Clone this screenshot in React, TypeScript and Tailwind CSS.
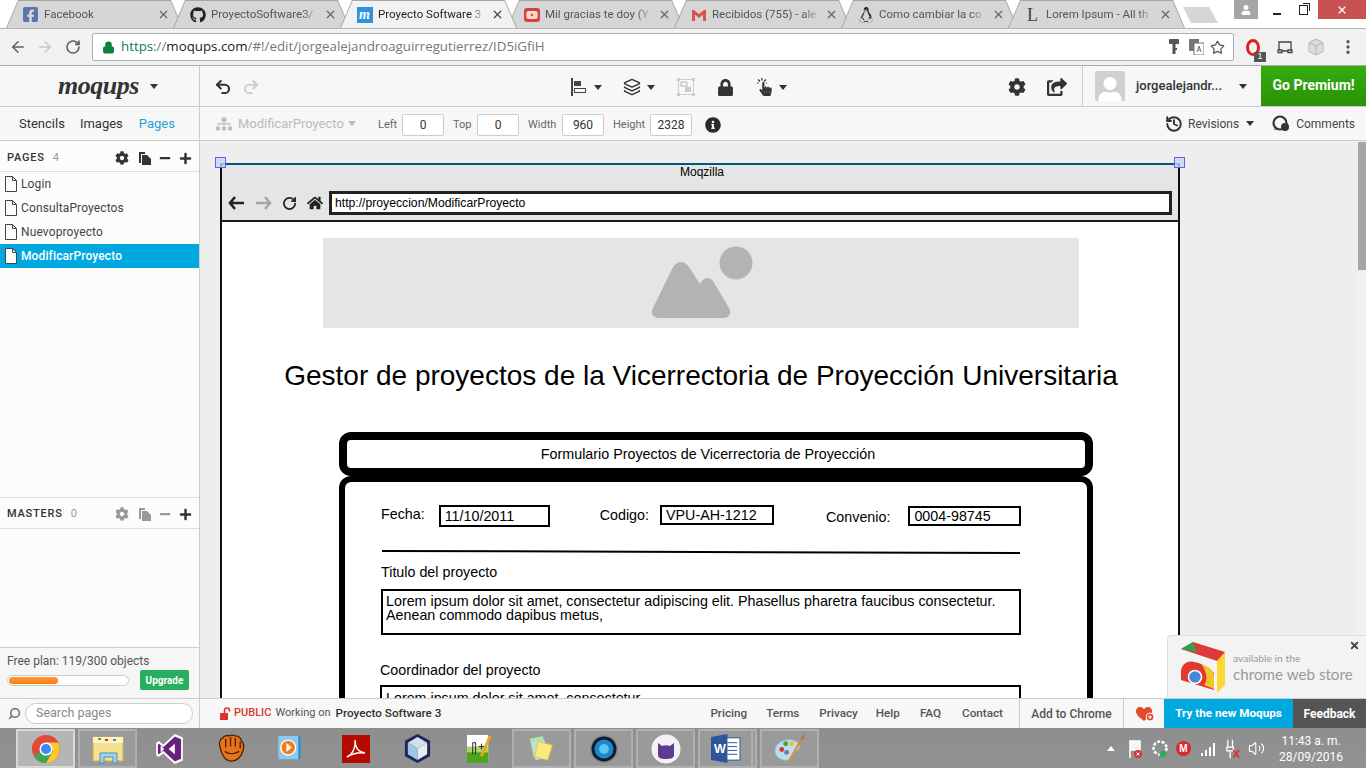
import { ArrowLeft, ArrowRight, RotateCw, Star, Lock, X, Search, Layers, MoreVertical, Undo2, Redo2, History, Volume2 } from "lucide-react"
import { FaFacebookSquare, FaGithub, FaYoutube, FaLinux, FaCog, FaHome, FaLock, FaPlus, FaMinus, FaInfoCircle, FaShareSquare, FaUser, FaHandPointer, FaSitemap } from "react-icons/fa"

const ui = "font-['Roboto',sans-serif]"
const arial = "font-['Liberation_Sans',Arial,sans-serif]"

function Caret({ className = "" }: { className?: string }) {
  return <span className={`inline-block h-0 w-0 shrink-0 border-x-[4px] border-t-[5px] border-x-transparent border-t-[#333] ${className}`} />
}

function Gmail() {
  return (
    <svg viewBox="0 0 16 16" className="h-4 w-4">
      <path d="M1 3h2l5 4 5-4h2v11h-3V7.5L8 11 4 7.5V14H1z" fill="#d9534a" />
    </svg>
  )
}

const tabs = [
  { title: "Facebook", icon: <FaFacebookSquare className="h-[17px] w-[17px] text-[#5a74ac]" /> },
  { title: "ProyectoSoftware3/", icon: <FaGithub className="h-4 w-4 text-[#222]" /> },
  {
    title: "Proyecto Software 3",
    active: true,
    icon: <span className="flex h-4 w-4 items-center justify-center bg-[#2d93dd] font-['Liberation_Serif',serif] text-[14px] font-bold italic leading-none text-white">m</span>,
  },
  { title: "Mil gracias te doy (Y", icon: <span className="flex h-[14px] w-4 items-center justify-center rounded-[3px] bg-[#d9413f]"><FaYoutube className="h-3 w-3 text-[#f7d9d0]" /></span> },
  { title: "Recibidos (755) - ale", icon: <Gmail /> },
  { title: "Como cambiar la co", icon: <FaLinux className="h-4 w-4 text-[#222]" /> },
  { title: "Lorem Ipsum - All th", icon: <span className="w-4 text-center font-['Liberation_Serif',serif] text-[18px] leading-none text-[#444]">L</span> },
]

function ChromeTab({ tab }: { tab: (typeof tabs)[0] }) {
  return (
    <div className={`relative -mr-[10px] h-[28px] w-[177px] shrink-0 ${tab.active ? "z-10" : ""}`}>
      <div className="absolute inset-0 bg-[#a6a6a6] [clip-path:polygon(0_100%,12px_0,165px_0,177px_100%)]" />
      <div className={`absolute inset-x-0 bottom-0 top-[1px] flex items-center pl-[16px] pr-[12px] [clip-path:polygon(1px_100%,12.5px_0,164.5px_0,176px_100%)] ${tab.active ? "bg-[#f2f2f2]" : "bg-[#d6d6d6]"}`}>
        <div className="flex w-[17px] shrink-0 justify-center">{tab.icon}</div>
        <span className={`ml-[5px] w-[108px] shrink-0 overflow-hidden whitespace-nowrap ${ui} text-[11.5px] [mask-image:linear-gradient(to_right,black_85%,transparent)] ${tab.active ? "text-[#222]" : "text-[#555]"}`}>
          {tab.title}
        </span>
        <X className={`ml-[5px] h-[13px] w-[13px] shrink-0 ${tab.active ? "text-[#444]" : "text-[#666]"}`} strokeWidth={2.2} />
      </div>
    </div>
  )
}

function TabStrip() {
  return (
    <div className="relative flex h-[28px] shrink-0 items-end bg-white pl-[6px]">
      {tabs.map((tab) => <ChromeTab key={tab.title} tab={tab} />)}
      <div className="ml-[8px] mt-[7px] h-[16px] w-[35px] self-start bg-[#d6d6d6] [clip-path:polygon(0_0,26px_0,35px_100%,8px_100%)]" />
      <div className="ml-auto flex h-[19px] self-start">
        <div className="flex w-[24px] items-center justify-center bg-[#a6a6a6]"><FaUser className="h-[10px] w-[10px] text-white" /></div>
        <div className="flex w-[38px] items-center justify-center pt-[3px]"><div className="mt-[5px] h-[2px] w-[8px] bg-[#222]" /></div>
        <div className="flex w-[22px] items-center justify-start pl-[3px]">
          <div className="relative h-[10px] w-[9px] border border-[#222]"><div className="absolute -right-[3px] -top-[3px] h-[8px] w-[7px] border-r border-t border-[#222]" /></div>
        </div>
        <div className="flex w-[48px] items-center justify-center bg-[#c75050]"><X className="h-[12px] w-[12px] text-white" strokeWidth={2.5} /></div>
      </div>
    </div>
  )
}

function AddressBar() {
  return (
    <div className="flex h-[38px] shrink-0 items-center border-y border-t-[#b5b5b5] border-b-[#ababab] bg-[#f2f2f2]">
      <ArrowLeft className="ml-[9px] h-[18px] w-[18px] text-[#5f5f5f]" strokeWidth={2} />
      <ArrowRight className="ml-[9px] h-[18px] w-[18px] text-[#c8c8c8]" strokeWidth={2} />
      <RotateCw className="ml-[11px] h-[16px] w-[16px] text-[#5f5f5f]" strokeWidth={2.4} />
      <div className="ml-[11px] flex h-[28px] w-[1142px] items-center rounded-[2px] border border-[#b0b0b0] bg-white pl-[9px] pr-[8px]">
        <Lock className="h-[13px] w-[13px] text-[#0b8043]" fill="#0b8043" strokeWidth={2} />
        <span className="ml-[6px] font-['Open_Sans',sans-serif] text-[13.3px] text-[#777]">
          <span className="text-[#0b8043]">https</span>://<span className="text-[#222]">moqups.com</span>/#!/edit/jorgealejandroaguirregutierrez/ID5iGfiH
        </span>
        <svg viewBox="0 0 10 16" className="ml-auto h-[16px] w-[10px]" fill="#555">
          <rect x="0" y="0" width="10" height="5" rx="1" />
          <rect x="3.5" y="4" width="3" height="11" />
          <rect x="6" y="9" width="2" height="2" />
        </svg>
        <svg viewBox="0 0 15 16" className="ml-[10px] h-[16px] w-[15px]">
          <rect x="0" y="0" width="10" height="12" fill="#777" />
          <rect x="5" y="4" width="10" height="12" fill="#fff" stroke="#777" />
          <path d="M8 13l2-6 2 6M9 11h2" fill="none" stroke="#777" />
        </svg>
        <Star className="ml-[6px] h-[15px] w-[15px] text-[#555]" strokeWidth={2} />
      </div>
      <div className="relative ml-[11px] flex w-[15px] justify-center">
        <span className="h-[17px] w-[14px] rounded-[50%] border-[3px] border-[#e01f1f]" />
        <span className="absolute -bottom-[6px] left-[9px] flex h-[10px] w-[12px] items-center justify-center bg-[#555] font-['Liberation_Sans',sans-serif] text-[9px] leading-none text-white">1</span>
      </div>
      <svg viewBox="0 0 16 16" className="ml-[17px] h-[16px] w-[16px]" fill="none" stroke="#444" strokeWidth="1.3">
        <path d="M2 11V3h12v8M1 11h4v2.5H1zM11 11h4v2.5h-4zM5 12h6" />
      </svg>
      <svg viewBox="0 0 16 18" className="ml-[15px] h-[18px] w-[16px]">
        <path d="M8 1l7 3.5v9L8 17l-7-3.5v-9z" fill="#dcdcdc" stroke="#b5b5b5" />
        <path d="M8 8v9M1 4.5L8 8l7-3.5" fill="none" stroke="#b5b5b5" />
      </svg>
      <MoreVertical className="ml-[15px] h-[18px] w-[18px] text-[#555]" strokeWidth={2.4} />
    </div>
  )
}

function AlignIcon() {
  return (
    <svg viewBox="0 0 16 18" className="h-[18px] w-[16px] shrink-0">
      <rect x="0" y="0" width="2" height="18" fill="#444" />
      <rect x="3" y="3" width="7" height="5" fill="#444" />
      <rect x="3.5" y="10.5" width="11" height="4" fill="none" stroke="#444" />
    </svg>
  )
}

function GroupIcon() {
  return (
    <svg viewBox="0 0 18 18" className="h-[18px] w-[18px] shrink-0">
      <rect x="1.5" y="1.5" width="15" height="15" fill="none" stroke="#ccc" />
      <rect x="4" y="4" width="6" height="4" fill="none" stroke="#bbb" />
      <rect x="8" y="9" width="6" height="5" fill="#ccc" />
      <rect x="0" y="0" width="3" height="3" fill="#ccc" />
      <rect x="15" y="0" width="3" height="3" fill="#ccc" />
      <rect x="0" y="15" width="3" height="3" fill="#ccc" />
      <rect x="15" y="15" width="3" height="3" fill="#ccc" />
    </svg>
  )
}

function TouchIcon() {
  return (
    <div className="relative ml-[24px] h-[18px] w-[15px] shrink-0">
      <svg viewBox="0 0 15 6" className="absolute left-0 top-0 h-[6px] w-[15px]" fill="none" stroke="#333" strokeWidth="1.2">
        <path d="M5 0v2.5M1 1.5l2 2M9 1.5l-2 2M0 5h1.5M10 5h-1" />
      </svg>
      <FaHandPointer className="absolute bottom-0 left-[2px] h-[14px] w-[13px] text-[#333]" />
    </div>
  )
}

function AppBar() {
  return (
    <div className={`flex h-[41px] shrink-0 items-stretch border-b border-[#ccc] bg-[#f7f7f7] ${ui}`}>
      <div className="flex w-[200px] shrink-0 items-center border-r border-[#ccc] pl-[58px]">
        <span className="font-['Liberation_Serif',serif] text-[26px] font-bold italic leading-none tracking-[-0.5px] text-[#333]">moqups</span>
        <Caret className="ml-[11px]" />
      </div>
      <div className="flex flex-1 items-center pt-[2px]">
        <Undo2 className="ml-[14px] h-[18px] w-[18px] text-[#333]" strokeWidth={2.8} />
        <Redo2 className="ml-[10px] h-[18px] w-[18px] text-[#ccc]" strokeWidth={2.8} />
        <div className="ml-[311px] flex"><AlignIcon /></div>
        <Caret className="ml-[7px]" />
        <Layers className="ml-[21px] h-[18px] w-[18px] text-[#333]" strokeWidth={2} />
        <Caret className="ml-[6px]" />
        <div className="ml-[22px] flex"><GroupIcon /></div>
        <FaLock className="ml-[23px] h-[17px] w-[15px] text-[#333]" />
        <TouchIcon />
        <Caret className="ml-[7px]" />
        <FaCog className="ml-[221px] h-[18px] w-[18px] text-[#333]" />
        <FaShareSquare className="ml-[21px] h-[18px] w-[20px] text-[#333]" />
      </div>
      <div className="flex w-[179px] shrink-0 items-center border-l border-[#ccc] pl-[12px]">
        <div className="flex h-[30px] w-[30px] items-end justify-center overflow-hidden rounded-[2px] bg-[#d0d0d0]"><FaUser className="-mb-[2px] h-[26px] w-[24px] text-white" /></div>
        <span className="ml-[11px] text-[13px] font-medium text-[#333]">jorgealejandr...</span>
        <Caret className="ml-auto mr-[14px]" />
      </div>
      <div className="flex w-[105px] shrink-0 items-center justify-center bg-gradient-to-b from-[#33ad0c] to-[#2a9207] pb-[2px] text-[14px] font-bold text-white">Go Premium!</div>
    </div>
  )
}

function Field({ label, value, labelWidth, className = "" }: { label: string; value: string; labelWidth: string; className?: string }) {
  return (
    <div className={`flex items-center ${className}`}>
      <span className={`${labelWidth} pt-[2px] text-[11px] text-[#666]`}>{label}</span>
      <div className="flex h-[22px] w-[42px] items-center justify-center rounded-[2px] border border-[#ccc] bg-white text-[12px] text-[#333]">{value}</div>
    </div>
  )
}

function CommentsIcon() {
  return (
    <svg viewBox="0 0 18 17" className="ml-[18px] h-[17px] w-[18px] shrink-0">
      <circle cx="8" cy="8" r="6.5" fill="none" stroke="#333" strokeWidth="2.2" />
      <path d="M2 15l2-3 2 2z" fill="#333" />
      <circle cx="13" cy="12" r="4" fill="#333" />
    </svg>
  )
}

function PropsBar() {
  return (
    <div className={`flex h-[34px] shrink-0 items-center border-b border-[#ccc] bg-[#f7f7f7] ${ui}`}>
      <div className="flex h-full w-[200px] shrink-0 items-center border-r border-[#ccc] pl-[19px] text-[13px] text-[#333]">
        <span>Stencils</span>
        <span className="ml-[15px]">Images</span>
        <span className="ml-[16px] text-[#2a9fd8]">Pages</span>
      </div>
      <FaSitemap className="ml-[16px] h-[16px] w-[16px] text-[#bbb]" />
      <span className="ml-[6px] w-[106px] text-[13px] text-[#bbb]">ModificarProyecto</span>
      <Caret className="ml-[4px] border-t-[#bbb]" />
      <div className="flex items-center pt-[2px]">
        <Field className="ml-[22px]" label="Left" value="0" labelWidth="w-[24px]" />
        <Field className="ml-[9px]" label="Top" value="0" labelWidth="w-[24px]" />
        <Field className="ml-[9px]" label="Width" value="960" labelWidth="w-[34px]" />
        <Field className="ml-[9px]" label="Height" value="2328" labelWidth="w-[37px]" />
        <FaInfoCircle className="ml-[13px] h-[16px] w-[16px] text-[#2a2a2a]" />
      </div>
      <History className="ml-auto h-[18px] w-[18px] text-[#333]" strokeWidth={2.6} />
      <span className="ml-[5px] text-[12px] text-[#444]">Revisions</span>
      <Caret className="ml-[7px]" />
      <CommentsIcon />
      <span className="ml-[6px] mr-[11px] text-[12px] text-[#444]">Comments</span>
    </div>
  )
}

function CopyIcon({ className }: { className: string }) {
  return (
    <svg viewBox="0 0 12 13" className={`h-[13px] w-[12px] shrink-0 ${className}`} fill="currentColor">
      <path d="M0 0h6v2H2v9H0z" />
      <path d="M3 3h5l4 4v6H3z" />
    </svg>
  )
}

function PanelHeader({ name, count, faded, nudge }: { name: string; count: string; faded?: boolean; nudge: string }) {
  const muted = faded ? "text-[#999]" : "text-[#333]"
  return (
    <div className={`flex h-[31px] shrink-0 items-center border-b border-[#ddd] px-[7px] ${nudge}`}>
      <span className="text-[11px] font-medium tracking-[0.8px] text-[#333]">{name}</span>
      <span className="ml-[8px] text-[11px] text-[#999]">{count}</span>
      <FaCog className={`ml-auto h-[14px] w-[14px] ${muted}`} />
      <CopyIcon className={`ml-[10px] ${muted}`} />
      <FaMinus className={`ml-[8px] h-[12px] w-[12px] ${muted}`} />
      <FaPlus className="ml-[8px] h-[13px] w-[13px] text-[#333]" />
    </div>
  )
}

const pages = ["Login", "ConsultaProyectos", "Nuevoproyecto", "ModificarProyecto"]

function Sidebar() {
  return (
    <aside className={`flex w-[200px] shrink-0 flex-col border-r border-[#ccc] bg-[#fcfcfc] ${ui}`}>
      <PanelHeader name="PAGES" count="4" nudge="pt-[4px]" />
      <ul>
        {pages.map((page, i) => {
          const active = i === 3
          return (
            <li key={page} className={`flex h-[24px] items-center pl-[5px] text-[12px] tracking-[0.12px] ${active ? "bg-[#00a8e0] font-medium text-white" : "text-[#444]"}`}>
              <svg viewBox="0 0 12 16" className="h-[16px] w-[12px] shrink-0">
                <path d="M.5.5h7l4 4v11H.5z" fill={active ? "#fff" : "none"} stroke="#444" />
                <path d="M7.5.5v4h4" fill="none" stroke="#444" />
              </svg>
              <span className="ml-[4px]">{page}</span>
            </li>
          )
        })}
      </ul>
      <div className="mt-[229px] border-t border-[#ddd]">
        <PanelHeader name="MASTERS" count="0" faded nudge="pt-[2px]" />
      </div>
      <div className="mt-auto flex h-[51px] flex-col border-t border-[#ccc] bg-[#f6f6f6] pl-[7px]">
        <span className="mt-[6px] text-[12px] leading-[14px] text-[#555]">Free plan: 119/300 objects</span>
        <div className="mt-[2px] flex items-center">
          <div className="h-[11px] w-[122px] rounded-full border border-[#ccc] bg-white p-[1px]">
            <div className="h-full w-[49px] rounded-full bg-gradient-to-b from-[#ff9a33] to-[#f97f10]" />
          </div>
          <div className="ml-[11px] flex h-[20px] w-[49px] items-center justify-center rounded-[2px] bg-[#27ae60] text-[10px] font-bold text-white">Upgrade</div>
        </div>
      </div>
    </aside>
  )
}

function MountainIcon() {
  return (
    <svg viewBox="0 0 102 73" className="h-[73px] w-[102px]">
      <circle cx="85" cy="17" r="16.5" fill="#b3b3b3" />
      <path d="M22 21c2-3 5-5 8-5s6 2 8 5l11 17 2-3c2-2 3-3 5-3 3 0 4 1 6 3l16 27c3 5 0 10-5 10H8c-6 0-9-5-6-10z" fill="#b3b3b3" />
    </svg>
  )
}

function Boxed({ className, children }: { className: string; children: React.ReactNode }) {
  return <div className={`flex items-center border-2 border-black bg-white pl-[4px] text-[14.3px] leading-none text-black ${className}`}>{children}</div>
}

function Mockup() {
  return (
    <div className={`absolute left-[20px] top-[22px] w-[960px] border-x-2 border-t-2 border-x-[#111] border-t-[#00587a] bg-white ${arial}`}>
      <div className="h-[57px] border-b-2 border-[#1a1a1a] bg-[#e5e5e5]">
        <div className="pl-[4px] text-center text-[12px] leading-[14px] text-black">Moqzilla</div>
        <div className="mt-[12px] flex items-center pl-[6px]">
          <svg viewBox="0 0 16 14" className="h-[14px] w-[16px]"><path d="M7 1L2 7l5 6M2 7h14" fill="none" stroke="#222" strokeWidth="2.6" /></svg>
          <svg viewBox="0 0 16 14" className="ml-[12px] h-[14px] w-[16px]"><path d="M9 1l5 6-5 6M14 7H0" fill="none" stroke="#a6a6a6" strokeWidth="2.6" /></svg>
          <RotateCw className="ml-[10px] h-[15px] w-[15px] text-[#222]" strokeWidth={2.8} />
          <FaHome className="ml-[10px] h-[16px] w-[16px] text-[#222]" />
          <div className="ml-[6px] flex h-[24px] w-[843px] items-center border-[3px] border-[#222] bg-white pl-[3px] text-[12.2px] text-black">http://proyeccion/ModificarProyecto</div>
        </div>
      </div>
      <div className="ml-[101px] mt-[16px] flex h-[90px] w-[756px] items-center justify-center bg-[#e5e5e5] pb-[1px] pl-[2px]">
        <MountainIcon />
      </div>
      <h1 className="mt-[29px] pl-[2px] text-center text-[28px] font-normal leading-[38px] text-black">Gestor de proyectos de la Vicerrectoria de Proyección Universitaria</h1>
      <div className="ml-[117px] mt-[37px] flex h-[44px] w-[754px] items-center justify-center rounded-[12px] border-[8px] border-black pr-[16px] pt-[2px] text-[14.3px] text-black">
        Formulario Proyectos de Vicerrectoria de Proyección
      </div>
      <div className="ml-[117px] h-[260px] w-[754px] rounded-t-[12px] border-x-[6px] border-t-[6px] border-black pl-[36px]">
        <div className="h-[36px] text-[14.3px] text-black">
          <div className="flex items-start pt-[24px]">
            <span className="leading-[16px]">Fecha:</span>
            <Boxed className="ml-[14px] -mt-[1px] h-[22px] w-[111px]">11/10/2011</Boxed>
            <span className="ml-[50px] mt-[1px] leading-[16px]">Codigo:</span>
            <Boxed className="ml-[11px] -mt-[1px] h-[20px] w-[114px]">VPU-AH-1212</Boxed>
            <span className="ml-[52px] mt-[3px] leading-[16px]">Convenio:</span>
            <Boxed className="ml-[18px] h-[20px] w-[113px]">0004-98745</Boxed>
          </div>
        </div>
        <div className="ml-[1px] mt-[33px] h-[2px] w-[638px] rotate-[0.2deg] bg-black" />
        <div className="mt-[11px] text-[14.3px] leading-[16px] text-black">Titulo del proyecto</div>
        <Boxed className="mt-[9px] h-[46px] w-[640px] !items-start !pl-[3px] pt-[3px]">
          <span className="leading-[14px]">Lorem ipsum dolor sit amet, consectetur adipiscing elit. Phasellus pharetra faucibus consectetur. Aenean commodo dapibus metus,</span>
        </Boxed>
        <div className="-ml-[1px] mt-[27px] text-[14.3px] leading-[16px] text-black">Coordinador del proyecto</div>
        <Boxed className="-ml-[1px] mt-[7px] h-[46px] w-[641px] !items-start pt-[4px]">
          <span className="leading-[14px]">Lorem ipsum dolor sit amet, consectetur</span>
        </Boxed>
      </div>
    </div>
  )
}

function Handle({ className }: { className: string }) {
  return <div className={`absolute top-[16px] h-[11px] w-[11px] border border-[#6a5ee8] bg-[#c9d4f5]/80 ${className}`} />
}

function StoreBagIcon() {
  return (
    <svg viewBox="0 0 46 52" className="h-[52px] w-[46px]">
      <path d="M2 8l36 12v32L2 40z" fill="#f4f4f4" />
      <path d="M38 20l8-9v33l-8 8z" fill="#fdd835" />
      <path d="M2 8L14 1l32 10-8 9z" fill="#dd3b3b" />
      <path d="M2 8L14 1l4 10z" fill="#2ea44f" />
      <path d="M2 31c0-7 6-12 13-10 7 1 14 5 20 11v17L2 39z" fill="#e0392f" />
      <path d="M22 23c7 2 13 6 13 12v13l-10-4c4-4 3-14-3-21z" fill="#f4c430" />
      <circle cx="16" cy="36" r="6.5" fill="#4a86d8" stroke="#fff" strokeWidth="1.5" />
    </svg>
  )
}

function StorePopup() {
  return (
    <div className="absolute bottom-0 right-0 z-10 flex h-[63px] w-[199px] items-center rounded-tl-[4px] border-l border-t border-[#ddd] bg-[#f3f3f3] pl-[11px]">
      <StoreBagIcon />
      <div className="ml-[8px] font-['Lato',sans-serif] text-[#999]">
        <div className="text-[10.3px] leading-[12px]">available in the</div>
        <div className="mt-[1px] text-[15.2px] leading-[18px]">chrome web store</div>
      </div>
      <X className="absolute right-[6px] top-[4px] h-[11px] w-[11px] text-[#444]" strokeWidth={4} />
    </div>
  )
}

function Canvas() {
  return (
    <main className="relative flex-1 overflow-hidden bg-[#eeeeee]">
      <Mockup />
      <Handle className="left-[15px]" />
      <Handle className="left-[974px]" />
      <div className="absolute bottom-0 right-0 top-0 w-[8px] bg-[#f1f1f1]">
        <div className="mt-[1px] h-[128px] w-[8px] bg-[#a6a6a6]" />
      </div>
      <StorePopup />
    </main>
  )
}

function FooterBar() {
  const link = "font-medium text-[#555] text-[11.7px]"
  return (
    <div className={`flex h-[30px] shrink-0 items-center border-t border-[#ccc] bg-[#f7f7f7] text-[11px] ${ui}`}>
      <div className="flex h-full w-[200px] shrink-0 items-center border-r border-[#ccc] pl-[8px]">
        <Search className="h-[13px] w-[13px] -scale-x-100 text-[#777]" strokeWidth={3} />
        <div className="ml-[4px] flex h-[21px] w-[168px] items-center rounded-full border border-[#ccc] bg-white pb-[1px] pl-[10px] text-[12.5px] text-[#888]">Search pages</div>
      </div>
      <svg viewBox="0 0 11 13" className="ml-[20px] h-[13px] w-[11px] shrink-0">
        <rect x="0" y="6" width="8" height="7" fill="#d9342b" />
        <path d="M2.5 6V3a2.5 2.5 0 0 1 5 0v1" transform="translate(2 .5)" fill="none" stroke="#d9342b" strokeWidth="1.5" />
      </svg>
      <span className="ml-[3px] font-medium text-[#d9342b]">PUBLIC</span>
      <span className="ml-[4px] text-[#555]">Working on</span>
      <span className="ml-[5px] text-[11.7px] font-medium text-[#333]">Proyecto Software 3</span>
      <span className={`ml-[269px] ${link}`}>Pricing</span>
      <span className={`ml-[19px] ${link}`}>Terms</span>
      <span className={`ml-[20px] ${link}`}>Privacy</span>
      <span className={`ml-[18px] ${link}`}>Help</span>
      <span className={`ml-[20px] ${link}`}>FAQ</span>
      <span className={`ml-[21px] ${link}`}>Contact</span>
      <div className="ml-auto flex h-full">
        <div className="flex w-[105px] items-center justify-center border-x border-[#ccc] text-[12px] font-medium text-[#555]">Add to Chrome</div>
        <div className="flex w-[40px] items-center justify-center pl-[1px]">
          <svg viewBox="0 0 20 16" className="h-[16px] w-[20px]">
            <path d="M9 15C4 11 1 9 1 5c0-2.500 2-4 4-4 1.700 0 3 .8 4 2.300C10 1.800 11.300 1 13 1c2 0 4 1.500 4 4 0 4-3 6-8 10z" fill="#e2492f" />
            <circle cx="15" cy="11" r="4" fill="#e2492f" stroke="#f7f7f7" />
            <path d="M13 11h4M15 9v4" stroke="#fff" />
          </svg>
        </div>
        <div className="flex w-[129px] items-center justify-center bg-[#00a8e0] text-[11.7px] font-bold text-white">Try the new Moqups</div>
        <div className="flex w-[73px] items-center justify-center bg-[#555] text-[12px] font-bold text-white">Feedback</div>
      </div>
    </div>
  )
}

function ChromeLogo() {
  return (
    <svg viewBox="0 0 32 32" className="h-[30px] w-[30px]">
      <circle cx="16" cy="16" r="15" fill="#dd4b39" />
      <path d="M16 16L3 23.5C5.6 28 10.4 31 16 31l7.5-13z" fill="#3aa757" />
      <path d="M16 9h13a15 15 0 0 1-13 22l7.5-13z" fill="#fcc934" />
      <circle cx="16" cy="16" r="7" fill="#fff" />
      <circle cx="16" cy="16" r="5.4" fill="#4285f4" />
    </svg>
  )
}

type TaskItem = { boxed?: "active" | "yes"; sliver?: boolean; icon: React.ReactNode }

const taskIcons: TaskItem[] = [
  { boxed: "active", icon: <ChromeLogo /> },
  {
    boxed: "yes",
    icon: <svg viewBox="0 0 34 30" className="h-[30px] w-[34px]"><path d="M2 3h30v24H2z" fill="#f5e08f" stroke="#c9ad55" /><path d="M2 3h30v6H2z" fill="#fdf3c4" /><path d="M7 4h3v2H7z" fill="#3aa757" /><path d="M14 5h3v2h-3z" fill="#d9342b" /><path d="M22 5h3v2h-3z" fill="#2d93dd" /><path d="M9 29V19h17v10h-4v-6H13v6z" fill="#9cd3ee" stroke="#4a92bd" /></svg>,
  },
  {
    icon: <svg viewBox="0 0 32 36" className="h-[32px] w-[29px]"><path d="M22 1l9 4v26l-9 4-13-12-5 4-3-2V11l3-2 5 4z" fill="#fff" /><path d="M22 4l7 3v22l-7 3-13-12-5 4-1-1v-10l1-1 5 4zM22 12l-7 6 7 6z" fill="#68217a" fillRule="evenodd" /><path d="M6 14v8l4-4z" fill="#fff" /></svg>,
  },
  {
    icon: <svg viewBox="0 0 30 30" className="h-[29px] w-[29px]"><path d="M3 13c-1-4 0-8 3-9 1-2 4-3 6-2 2-1 5-1 7 0 3 0 6 2 6 5 3 2 3 6 2 10-2 6-6 11-12 11S5 22 3 13z" fill="#e8731a" stroke="#4a2306" strokeWidth="1.4" /><path d="M9 5v9M14 3v10M19 4v9M24 8v7M8 18c4 3 10 3 15 0" fill="none" stroke="#4a2306" strokeWidth="1.4" /></svg>,
  },
  {
    icon: <svg viewBox="0 0 28 30" className="mr-[8px] h-[27px] w-[26px]"><rect x="4" y="1" width="22" height="26" fill="#3a8fc9" /><rect x="1" y="1" width="22" height="26" fill="#8ec8ea" /><circle cx="12" cy="14" r="9" fill="#fff" /><circle cx="12" cy="14" r="7.500" fill="#ec7c1c" /><path d="M10 9l6 5-6 5z" fill="#fff" /></svg>,
  },
  {
    icon: <svg viewBox="0 0 28 28" className="h-[28px] w-[28px]"><rect width="28" height="28" fill="#b30b00" /><path d="M5 22c6-3 9-10 8-17 0 7 3 12 10 13-6-1-13 1-18 4z" fill="none" stroke="#fff" strokeWidth="1.4" /></svg>,
  },
  {
    icon: <svg viewBox="0 0 30 32" className="h-[31px] w-[29px]"><path d="M15 1l13 7v16l-13 7-13-7V8z" fill="#1f2560" /><path d="M15 4l10 6-10 6-10-6z" fill="#cfe3e6" /><path d="M5 10l10 6v12L5 22z" fill="#9fc8e6" /><path d="M25 10l-10 6v12l10-6z" fill="#e6edf0" /></svg>,
  },
  {
    icon: <svg viewBox="0 0 28 32" className="h-[31px] w-[27px]"><rect x="1" y="2" width="22" height="29" fill="#fff" /><path d="M1 18h22v13H1z" fill="#4fa31d" /><path d="M1 14h22v6H1z" fill="#a8d66c" /><path d="M7 22V10h3v12M13 14h6M16 11v6" fill="none" stroke="#222" /><path d="M25 3L16 24" stroke="#e8a91c" strokeWidth="3" /></svg>,
  },
  {
    boxed: "yes",
    icon: <svg viewBox="0 0 32 30" className="h-[28px] w-[30px]"><path d="M3 4l14-3 4 20-14 3z" fill="#b0e3a4" /><path d="M5 8l14-2 3 18-13 3z" fill="#bcdcf4" /><path d="M12 7l15 4-5 16-14-4z" fill="#fde97c" stroke="#e3c84d" /></svg>,
  },
  {
    boxed: "yes",
    icon: <svg viewBox="0 0 30 30" className="h-[30px] w-[30px]"><circle cx="15" cy="15" r="14" fill="#888" /><circle cx="15" cy="15" r="12.500" fill="#0d1e33" /><circle cx="15" cy="15" r="9.500" fill="#1d87c9" /><circle cx="15" cy="15" r="5" fill="#5cc4ee" /></svg>,
  },
  {
    boxed: "yes",
    icon: <svg viewBox="0 0 30 30" className="h-[30px] w-[30px]"><circle cx="15" cy="15" r="14.500" fill="#f4f0f8" /><path d="M7 9l4 3c3-1 5-1 8 0l4-3v12c0 3-3 4-8 4s-8-1-8-4z" fill="#5e3b8c" /></svg>,
  },
  {
    boxed: "yes",
    sliver: true,
    icon: <svg viewBox="0 0 32 30" className="h-[29px] w-[31px]"><rect x="13" y="4" width="18" height="23" fill="#fff" stroke="#2b579a" /><path d="M18 9h10M18 13h10M18 17h10M18 21h10" stroke="#2b579a" /><path d="M1 3l17-3v30L1 27z" fill="#2b579a" /><text x="4" y="20" fontFamily="Liberation Sans" fontSize="13" fontWeight="bold" fill="#fff">W</text></svg>,
  },
  {
    boxed: "yes",
    icon: <svg viewBox="0 0 34 32" className="h-[31px] w-[33px]"><path d="M2 20C1 11 10 6 19 7c8 1 11 8 6 11-4 2-4 5-6 8-3 4-15 3-17-6z" fill="#bcdcef" stroke="#8cb6cf" /><circle cx="9" cy="17" r="2.500" fill="#d9342b" /><circle cx="13" cy="11" r="2.500" fill="#4fa31d" /><circle cx="19" cy="11" r="2.500" fill="#f0c21f" /><circle cx="14" cy="20" r="2.500" fill="#6a7ea0" /><path d="M16 30L29 7" stroke="#e08b1c" strokeWidth="2.2" /><path d="M28 8l3-7 2 4z" fill="#9a7a55" /></svg>,
  },
]

function TrayIcons() {
  return (
    <div className="flex items-center">
      <div className="h-0 w-0 border-x-[4px] border-b-[5px] border-x-transparent border-b-white" />
      <svg viewBox="0 0 14 20" className="ml-[13px] h-[20px] w-[14px]"><path d="M2 1v18M2 2h10v9H2" fill="#f5f5f5" stroke="#fff" strokeWidth="1.5" /><circle cx="10" cy="15" r="4" fill="#d9342b" /><path d="M8.500 13.500l3 3M11.500 13.500l-3 3" stroke="#fff" /></svg>
      <svg viewBox="0 0 16 20" className="ml-[10px] h-[20px] w-[16px]"><circle cx="8" cy="9" r="6.500" fill="none" stroke="#fff" strokeWidth="2.500" strokeDasharray="3 1.500" /><circle cx="11" cy="15" r="3.500" fill="#34a853" /></svg>
      <div className="ml-[8px] flex h-[15px] w-[15px] items-center justify-center rounded-full bg-[#d9272e] font-['Liberation_Sans',sans-serif] text-[10px] font-bold leading-none text-white">M</div>
      <svg viewBox="0 0 16 16" className="ml-[9px] h-[16px] w-[16px]" fill="#fff"><path d="M1 12h2v3H1zM5 9h2v6H5zM9 6h2v9H9zM13 2h2v13h-2z" /></svg>
      <svg viewBox="0 0 16 22" className="ml-[9px] h-[22px] w-[15px]"><path d="M3 1v8M8 1v8M2 9h7v4H2zM5.500 13v8" fill="none" stroke="#fff" strokeWidth="1.400" /><path d="M9 12l6 8M15 12l-6 8" stroke="#d9342b" strokeWidth="2" /></svg>
      <Volume2 className="ml-[8px] h-[17px] w-[17px] text-white" strokeWidth={1.6} />
    </div>
  )
}

function Taskbar() {
  return (
    <div className="flex h-[40px] shrink-0 items-stretch bg-gradient-to-b from-[#8e8e8e] to-[#929292] pl-[16px] pt-[1px]">
      {taskIcons.map((item, i) => (
        <div key={i} className="mr-[3px] flex w-[59px] shrink-0">
          <div
            className={`flex min-w-0 flex-1 items-center justify-center ${
              item.boxed === "active" ? "border-2 border-[#d8d8d8] bg-[#b5b5b5]" : item.boxed ? "border-2 border-[#b0b0b0] bg-[#9a9a9a]" : ""
            }`}
          >
            {item.icon}
          </div>
          {item.sliver && <div className="w-[4px] shrink-0 border-y-2 border-r-2 border-[#b0b0b0] bg-[#9a9a9a]" />}
        </div>
      ))}
      <div className="ml-[285px] flex items-center"><TrayIcons /></div>
      <div className={`ml-[8px] flex w-[76px] flex-col items-center justify-center text-[12px] leading-[16px] text-white ${ui}`}>
        <span>11:43 a. m.</span>
        <span>28/09/2016</span>
      </div>
    </div>
  )
}

export default function App() {
  return (
    <div className="relative flex h-[768px] w-[1366px] flex-col overflow-hidden bg-white">
      <TabStrip />
      <AddressBar />
      <AppBar />
      <PropsBar />
      <div className="flex min-h-0 flex-1">
        <Sidebar />
        <Canvas />
      </div>
      <FooterBar />
      <Taskbar />
    </div>
  )
}
